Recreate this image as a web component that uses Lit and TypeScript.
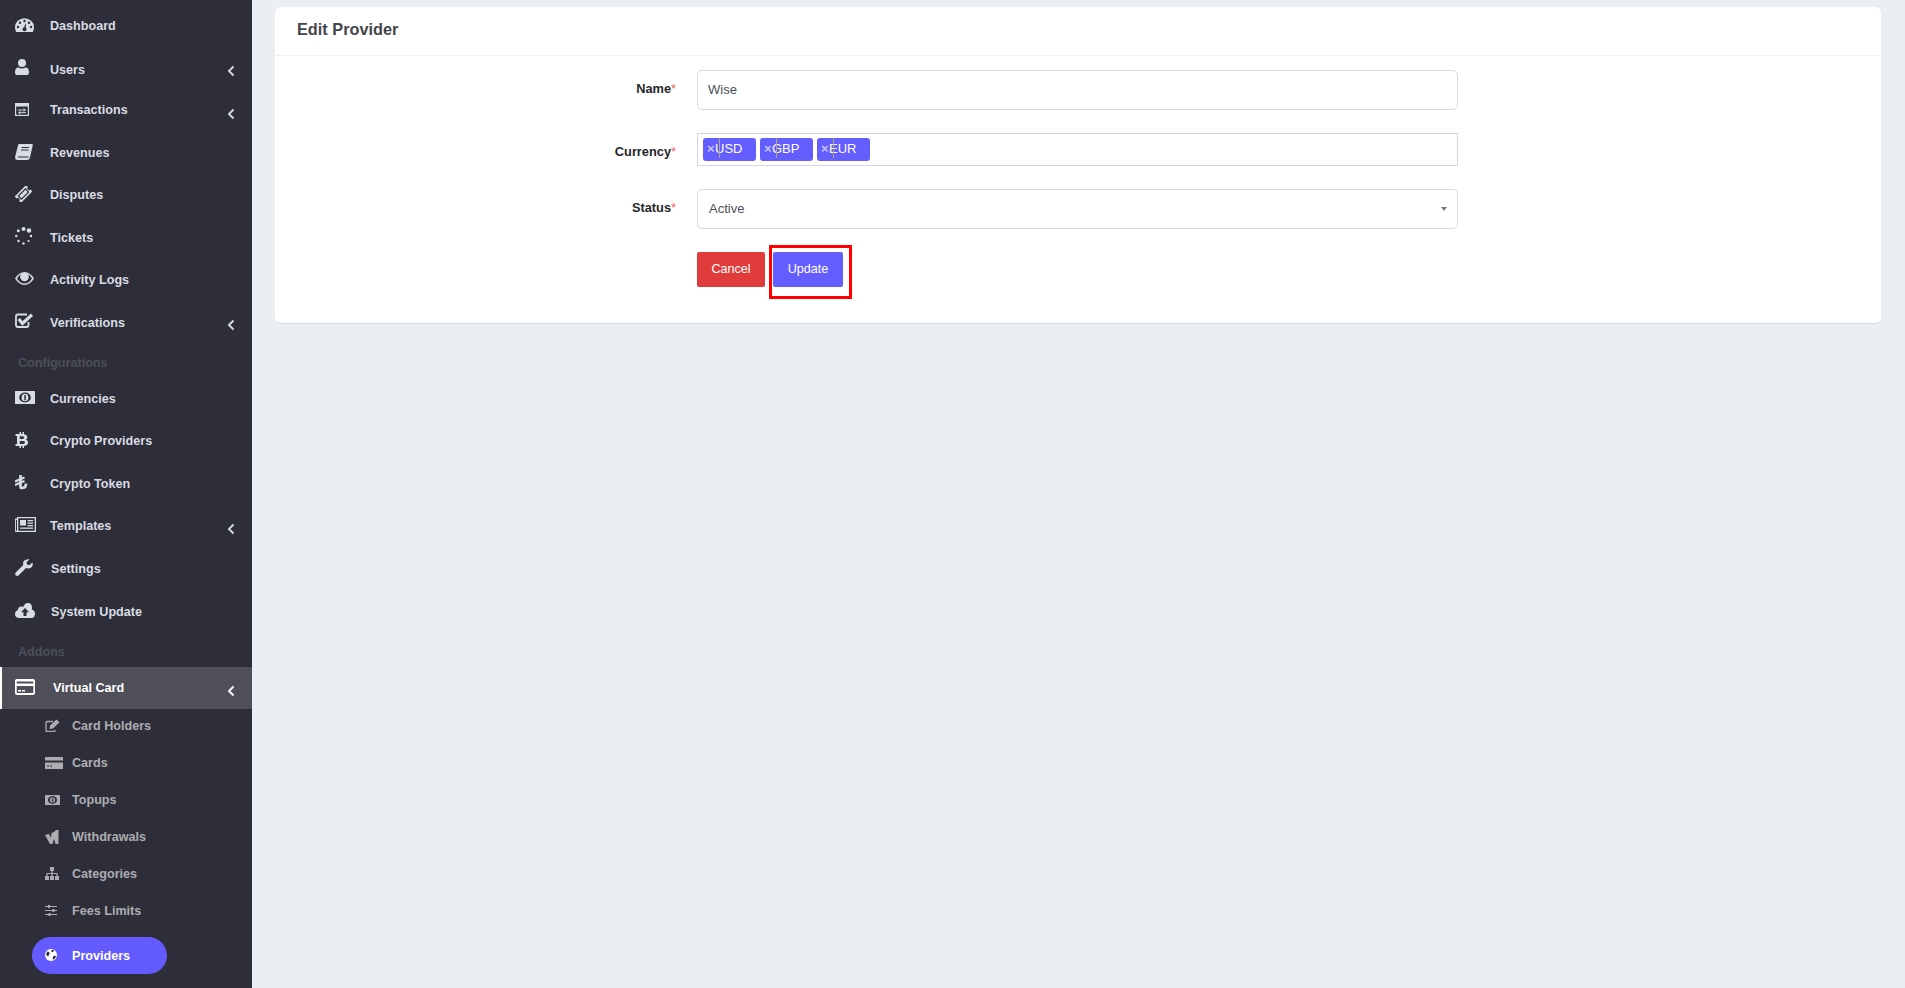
import { LitElement, html, css, svg } from "lit";
import { customElement } from "lit/decorators.js";

const D = "#2d2e39";
const icons: Record<string, [number, number, any]> = {
  dash: [19, 14, svg`<path d="M1.200 14Q0 11.500 0 9.200A9.500 9 0 0 1 19 9.200Q19 11.500 17.800 14Z"/><g fill="${D}"><circle cx="3" cy="9" r="1.200"/><circle cx="5" cy="4.800" r="1.200"/><circle cx="9.500" cy="3" r="1.200"/><circle cx="14" cy="4.800" r="1.200"/><circle cx="16" cy="9" r="1.200"/><circle cx="9.500" cy="11.200" r="2"/><path d="M8.500 11L10.500 5.500 11 5.700 10.700 11Z"/></g>`],
  user: [14, 16, svg`<circle cx="7" cy="4" r="4"/><path d="M0 13.500Q0 8.500 3.500 8.500Q7 10.500 10.500 8.500Q14 8.500 14 13.500Q14 16 12 16H2Q0 16 0 13.500Z"/>`],
  trans: [14, 13, svg`<rect x=".6" y=".6" width="12.800" height="11.800" fill="none" stroke="currentColor" stroke-width="1.200"/><rect x="1" y="1" width="12" height="2.500"/><path d="M3 7H10M8.500 5.700L10.500 7 8.500 8.300M11 9.700H4M5.500 8.400L3.500 9.700 5.500 11" fill="none" stroke="currentColor" stroke-width="1"/>`],
  book: [18, 16, svg`<path d="M4 0H17Q18 0 17.700 1.500L15 13.500Q14.500 16 12 16H2.500Q-.5 16 .2 12.500L3 1.200Q3.300 0 4 0Z"/><path d="M6.500 3.500H14M6 6H13.500M3 13H13.500" stroke="${D}" stroke-width="1.100" fill="none"/>`],
  ticket: [17, 16, svg`<g transform="rotate(-45 8.500 8)"><path d="M.5 3.500H16.500V6.200A1.800 1.800 0 0 0 16.500 9.800V12.500H.5V9.800A1.800 1.800 0 0 0 .5 6.200Z"/><rect x="3.500" y="5.800" width="10" height="4.400" fill="none" stroke="${D}" stroke-width="1.200"/></g>`],
  spin: [17, 18, svg`<circle cx="8.500" cy="2" r="2"/><circle cx="14" cy="3.500" r="2.300"/><circle cx="16" cy="9" r="1.300"/><circle cx="13.500" cy="14" r="1.100"/><circle cx="8.500" cy="16.500" r="1.200"/><circle cx="3.500" cy="14" r="1.200"/><circle cx="1.300" cy="9" r="1.200"/><circle cx="3.300" cy="3.800" r="1.500"/>`],
  eye: [19, 13, svg`<path d="M0 6.500Q4 0 9.500 0Q15 0 19 6.500Q15 13 9.500 13Q4 13 0 6.500Z"/><path d="M2 6.500Q4 3 6.200 2.200A4.200 4.200 0 1 0 12.800 2.200Q15 3 17 6.500Q14 11.500 9.500 11.500Q5 11.500 2 6.500Z" fill="${D}"/><circle cx="9.500" cy="5.200" r="3.600"/>`],
  check: [18, 15, svg`<path d="M13.500 9V12Q13.500 14 11.500 14H3Q1 14 1 12V3.500Q1 1.500 3 1.500H12" fill="none" stroke="currentColor" stroke-width="1.800"/><path d="M3.800 6L7.500 10.500 17 1.700" fill="none" stroke="currentColor" stroke-width="3.200"/>`],
  money: [20, 13, svg`<rect width="20" height="13" rx=".5"/><ellipse cx="10" cy="6.500" rx="5.800" ry="5" fill="${D}"/><ellipse cx="10" cy="6.500" rx="3.400" ry="3.800"/><path d="M9.300 4.200L10.800 3.800V9.200H9.300Z" fill="${D}"/>`],
  btc: [13, 16, svg`<path d="M4.500 0H6V2H7.500V0H9V2.300Q12.500 3 12.300 5.500Q12.200 7 11 7.800Q13.300 8.500 13 11Q12.700 13.500 9 14V16H7.500V14H6V16H4.500V14H.5V12H2V4H.5V2H4.500Z"/><path d="M4.800 4.300H7.500Q9.300 4.500 9.300 5.700Q9.300 6.800 7.500 7H4.800ZM4.800 9H8Q10 9.200 10 10.500Q10 11.700 8 11.900H4.800Z" fill="${D}"/>`],
  lira: [13, 15, svg`<path d="M5.500 0V11.500Q5.500 13 7 13Q11 13 11 8.500" fill="none" stroke="currentColor" stroke-width="2.700"/><path d="M0 6.500L9.500 2.500M0 10L9.500 6" stroke="currentColor" stroke-width="2.200" fill="none"/>`],
  news: [21, 15, svg`<path fill-rule="evenodd" d="M0 1.500H2V0H21V15H1Q0 15 0 14ZM3.300 1.300V13.700H19.700V1.300ZM.9 3V13.500H2V3Z"/><rect x="5" y="3" width="6" height="5.500"/><rect x="12.500" y="3" width="5.500" height="1.300"/><rect x="12.500" y="5.500" width="5.500" height="1.300"/><rect x="12.500" y="8" width="5.500" height="1.300"/><rect x="5" y="10.500" width="13" height="1.300"/>`],
  wrench: [18, 17, svg`<path d="M17.500 3.500Q18.500 8 14.500 9.300Q12.500 9.800 11 9L3.500 16.500Q1.800 17.500 .6 16.300Q-.3 15 .7 13.500L8.300 6Q7.500 3.500 9 1.800Q11 -.3 14.500 .3L11.500 3.200 12 5.500 14.300 6.200Z"/>`],
  cloud: [20, 15, svg`<path d="M4.500 15Q0 15 0 11Q0 8 3 7Q3 3.500 6.500 3.500Q7.500 3.500 8.200 4Q9.500 0 13 0Q17 0 17 5Q17 6 16.800 6.500Q20 7.500 20 10.800Q20 15 16 15Z"/><path d="M10 5L14 9.300H11.500V13H8.500V9.300H6Z" fill="${D}"/>`],
  card: [20, 16, svg`<path fill-rule="evenodd" d="M2 0H18Q20 0 20 2V14Q20 16 18 16H2Q0 16 0 14V2Q0 0 2 0ZM1.700 2.500V4.500H18.300V2.500ZM1.700 7V14H18.300V7Z"/><rect x="3" y="11" width="3" height="1.500"/><rect x="7" y="11" width="3" height="1.500"/>`],
  edit: [15, 13, svg`<path d="M10 11V11.500Q10 12.500 9 12.500H2Q1 12.500 1 11.500V3.500Q1 2.500 2 2.500H8" fill="none" stroke="currentColor" stroke-width="1.300"/><path d="M5 6.500L11.500 .5 14.500 3.200 8 9.500 4.500 10Z"/>`],
  cardf: [18, 12, svg`<rect width="18" height="3.500"/><path fill-rule="evenodd" d="M0 5.500H18V12H0ZM2 8.500V9.500H4V8.500ZM5 8.500V9.500H7V8.500Z"/>`],
  money2: [15, 10, svg`<rect width="15" height="10" rx=".5"/><ellipse cx="7.500" cy="5" rx="4.500" ry="3.900" fill="${D}"/><ellipse cx="7.500" cy="5" rx="2.500" ry="2.800"/><path d="M7 3.500L8.200 3.100V7H7Z" fill="${D}"/>`],
  wise: [14, 14, svg`<path d="M0 5L4 4 6 8 6.500 3 9 2 11 0 13.500 0V14H10.500L9 9 7.500 14H5Z"/>`],
  site: [14, 13, svg`<rect x="5" y="0" width="4" height="4"/><rect x="0" y="9" width="4" height="4"/><rect x="5" y="9" width="4" height="4"/><rect x="10" y="9" width="4" height="4"/><path d="M7 4V9M2 9V6.500H12V9" fill="none" stroke="currentColor" stroke-width="1.200"/>`],
  sliders: [12, 11, svg`<path d="M0 1.500H12M0 5.500H12M0 9.500H12" stroke="currentColor" stroke-width="1.100"/><rect x="3" y="0" width="2" height="3"/><rect x="7.500" y="4" width="2" height="3"/><rect x="3.500" y="8" width="2" height="3"/>`],
  globe: [12, 12, svg`<circle cx="6" cy="6" r="6"/><path d="M2.500 2.500Q5 3 4.500 5Q3 5.500 3.500 7.500Q1.500 7 1.200 5Q1.500 3.500 2.500 2.500ZM8.500 7Q10.500 6.500 11 7.500Q10 10 8 10.800Q7 9 8.500 7ZM6.500 1H9L8 3H6.500Z" fill="${D}"/>`],
};

const ic = (n: string) => {
  const [w, h, body] = icons[n];
  return svg`<svg class="i" width="${w}" height="${h}" viewBox="0 0 ${w} ${h}" fill="currentColor">${body}</svg>`;
};
const chev = html`<svg class="chev" width="8" height="12" viewBox="0 0 8 12"><path d="M6.500 1.500L2 6L6.500 10.500" fill="none" stroke="currentColor" stroke-width="1.900"/></svg>`;

type Row = readonly [string, string, number, number?];
const group1: Row[] = [["dash","Dashboard",0],["user","Users",1,3],["trans","Transactions",1,-2],["book","Revenues",0],["ticket","Disputes",0],["spin","Tickets",0],["eye","Activity Logs",0],["check","Verifications",1,1]];
const group2: Row[] = [["money","Currencies",0],["btc","Crypto Providers",0],["lira","Crypto Token",0],["news","Templates",1],["wrench","Settings",0],["cloud","System Update",0]];
const subs = [["edit","Card Holders"],["cardf","Cards"],["money2","Topups"],["wise","Withdrawals"],["site","Categories"],["sliders","Fees Limits"]] as const;

@customElement("app-root")
export class AppRoot extends LitElement {
  static styles = css`
    :host { display: flex; width: 1905px; height: 988px; overflow: hidden; background: #ebeef3; font-family: "Liberation Sans", Arial, sans-serif; position: relative; }
    .side { width: 252px; flex: none; background: #2d2e39; padding-top: 5px; box-sizing: border-box; overflow: hidden; }
    .row { display: flex; align-items: center; height: 42.3px; padding-left: 15px; color: #d9dce3; font-size: 12.6px; font-weight: 700; }
    .g2 .row { height: 42.6px; }
    .ibox { width: 35px; flex: none; display: flex; align-items: center; margin-bottom: 3px; }
    .i { display: block; flex: none; }
    .chev { margin-left: auto; margin-right: 17px; margin-top: 6px; color: #d9dce3; }
    .shift { margin-left: 1px; }
    .group { height: 34px; padding: 5px 0 0 18px; box-sizing: border-box; display: flex; align-items: center; color: #4c4e58; font-size: 12.6px; font-weight: 700; }
    .group.b { height: 34.5px; padding-top: 3px; }
    .row.active { height: 42px; background: #4e4f59; border-left: 2px solid #fff; padding-left: 13px; color: #fff; }
    .active .ibox { width: 38px; }
    .active .chev { color: #fff; }
    .subs { margin-top: -1.5px; }
    .sub { display: flex; align-items: center; height: 37px; padding-left: 45px; color: #adadb1; font-size: 12.6px; font-weight: 700; }
    .sub .ibox { width: 27px; margin-bottom: 1px; }
    .pill { display: flex; align-items: center; width: 135px; height: 37px; margin: 7.5px 0 0 32px; padding-left: 13px; box-sizing: border-box; border-radius: 19px; background: #645bff; color: #fff; font-size: 12.6px; font-weight: 700; }
    .pill .ibox { width: 27px; margin-bottom: 1px; }
    .main { flex: 1; padding: 7px 24px 0 23px; }
    .panel { background: #fff; border-radius: 6px; border-bottom: 1px solid #d6d9de; }
    .head { height: 49px; padding: 0 0 4px 22px; box-sizing: border-box; display: flex; align-items: center; border-bottom: 1px solid #f0f1f3; font-size: 16.3px; font-weight: 700; color: #45464a; }
    .form { display: grid; grid-template-columns: 401px 761px; column-gap: 21px; row-gap: 23px; padding: 14px 0 36px; align-items: start; }
    .lab { padding-top: 11px; line-height: 16px; text-align: right; font-size: 12.8px; font-weight: 700; color: #26272b; }
    .lab span { color: #f25f5f; font-weight: 400; }
    .field { height: 40px; box-sizing: border-box; border: 1px solid #d8d9dd; border-radius: 5px; display: flex; align-items: center; padding: 0 0 2px 10px; font-size: 13px; color: #495057; background: #fff; }
    .sel { padding-left: 11px; justify-content: space-between; padding-right: 10px; }
    .arrow { width: 0; height: 0; margin-top: 2px; border-left: 3px solid transparent; border-right: 3px solid transparent; border-top: 4px solid #777; }
    .tags { height: 33px; box-sizing: border-box; border: 1px solid #d3d6dc; display: flex; align-items: flex-start; gap: 4px; padding: 4px 0 0 5px; }
    .tag { position: relative; width: 53px; height: 23px; box-sizing: border-box; border-radius: 3px; background: #645dff; color: #fff; font-size: 13px; display: flex; align-items: center; padding: 0 0 2px 4px; }
    .tag b { color: #c6c3ff; font-size: 13px; width: 8px; flex: none; }
    .tag::after { content: ""; position: absolute; left: 16px; top: 0; width: 1px; height: 20px; background: #a9a97e; }
    .btns { display: flex; gap: 8px; }
    .btn { height: 35px; padding-bottom: 2px; box-sizing: border-box; border-radius: 2px; display: flex; align-items: center; justify-content: center; color: #fff; font-size: 12.6px; }
    .cancel { width: 68px; background: #e03c3c; }
    .update { width: 70px; background: #645dff; }
    .mark { position: absolute; left: 769px; top: 245px; width: 83px; height: 54px; box-sizing: border-box; border: 3px solid #f00; }
  `;

  private row(r: Row, shift = false) {
    const dy = r[3] ?? 0;
    return html`<div class="row"><span class="ibox">${ic(r[0])}</span><span class=${shift ? "shift" : ""} style=${dy ? `margin-top:${dy}px` : ""}>${r[1]}</span>${r[2] ? chev : ""}</div>`;
  }

  render() {
    return html`
      <aside class="side">
        ${group1.map((r) => this.row(r))}
        <div class="group">Configurations</div>
        <div class="g2">${group2.map((r) => this.row(r, r[1] === "Settings" || r[1] === "System Update"))}</div>
        <div class="group b">Addons</div>
        <div class="row active"><span class="ibox">${ic("card")}</span><span>Virtual Card</span>${chev}</div>
        <div class="subs">
          ${subs.map((s) => html`<div class="sub"><span class="ibox">${ic(s[0])}</span><span>${s[1]}</span></div>`)}
        </div>
        <div class="pill"><span class="ibox">${ic("globe")}</span><span>Providers</span></div>
      </aside>
      <main class="main">
        <section class="panel">
          <div class="head">Edit Provider</div>
          <div class="form">
            <div class="lab">Name<span>*</span></div>
            <div class="field">Wise</div>
            <div class="lab">Currency<span>*</span></div>
            <div class="tags">
              ${["USD", "GBP", "EUR"].map((t) => html`<div class="tag"><b>×</b>${t}</div>`)}
            </div>
            <div class="lab">Status<span>*</span></div>
            <div class="field sel">Active<i class="arrow"></i></div>
            <div></div>
            <div class="btns"><div class="btn cancel">Cancel</div><div class="btn update">Update</div></div>
          </div>
        </section>
      </main>
      <div class="mark"></div>
    `;
  }
}
